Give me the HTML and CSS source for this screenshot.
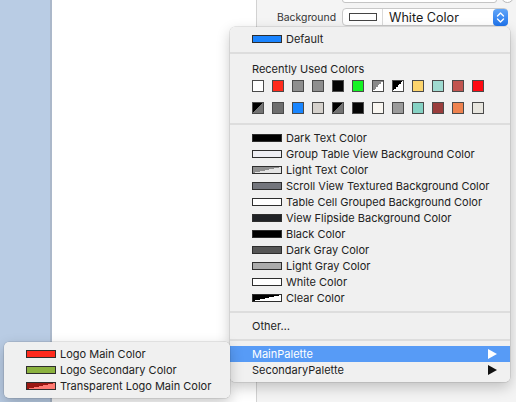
FILE: index.html
```html
<!DOCTYPE html>
<html>
<head>
<meta charset="utf-8">
<link rel="stylesheet" href="styles.css">
</head>
<body>
<div class="app">
  <div class="sidebar"></div>
  <div class="canvas"></div>
  <div class="inspector">
    <div class="field-row">
      <div class="field"></div>
      <div class="round"></div>
    </div>
    <div class="bg-row">
      <span class="bg-label">Background</span>
      <div class="popup">
        <span class="popup-well"><span class="well-swatch"></span></span>
        <span class="popup-text">White Color</span>
        <span class="stepper">
          <svg width="9" height="13" viewBox="0 0 9 13"><path d="M1.5 5 L4.5 2 L7.5 5 M1.5 8 L4.5 11 L7.5 8" fill="none" stroke="#fff" stroke-width="1.4" stroke-linecap="round" stroke-linejoin="round"/></svg>
        </span>
      </div>
    </div>
  </div>
</div>

<div class="menu">
  <div class="item"><span class="sw" style="background:#1a84ff"></span>Default</div>
  <div class="sep"></div>
  <div class="item label">Recently Used Colors</div>
  <div class="grid">
    <span class="cs" style="background:#ffffff"></span>
    <span class="cs" style="background:#ff2b1c"></span>
    <span class="cs" style="background:#8e8e8e"></span>
    <span class="cs" style="background:#8e8e8e"></span>
    <span class="cs" style="background:#050505"></span>
    <span class="cs" style="background:#15f224"></span>
    <span class="cs" style="background:linear-gradient(to bottom right,#8a8a8a 50%,#ffffff 50%)"></span>
    <span class="cs" style="background:linear-gradient(to bottom right,#000000 50%,#ffffff 50%)"></span>
    <span class="cs" style="background:#fdd46c"></span>
    <span class="cs" style="background:#9fdad0"></span>
    <span class="cs" style="background:#c1544f"></span>
    <span class="cs" style="background:#ff0a12"></span>
    <span class="cs" style="background:linear-gradient(to bottom right,#000000 50%,#747474 50%)"></span>
    <span class="cs" style="background:#6e6e6e"></span>
    <span class="cs" style="background:#1a86ff"></span>
    <span class="cs" style="background:#d5d1cc"></span>
    <span class="cs" style="background:linear-gradient(to bottom right,#000000 50%,#747474 50%)"></span>
    <span class="cs" style="background:#050505"></span>
    <span class="cs" style="background:#f9f6f1"></span>
    <span class="cs" style="background:#9b9b9b"></span>
    <span class="cs" style="background:#86d2c4"></span>
    <span class="cs" style="background:#9a3d3c"></span>
    <span class="cs" style="background:#ee824f"></span>
    <span class="cs" style="background:#e7e5de"></span>
  </div>
  <div class="sep"></div>
  <div class="item"><span class="sw" style="background:#000000"></span>Dark Text Color</div>
  <div class="item"><span class="sw" style="background:#efeff4"></span>Group Table View Background Color</div>
  <div class="item"><span class="sw" style="background:linear-gradient(to bottom right,#8f8f8f 50%,#e4e4e4 50%)"></span>Light Text Color</div>
  <div class="item"><span class="sw" style="background:#73757c"></span>Scroll View Textured Background Color</div>
  <div class="item"><span class="sw" style="background:#ffffff"></span>Table Cell Grouped Background Color</div>
  <div class="item"><span class="sw" style="background:#202226"></span>View Flipside Background Color</div>
  <div class="item"><span class="sw" style="background:#000000"></span>Black Color</div>
  <div class="item"><span class="sw" style="background:#565656"></span>Dark Gray Color</div>
  <div class="item"><span class="sw" style="background:#ababab"></span>Light Gray Color</div>
  <div class="item"><span class="sw" style="background:#ffffff"></span>White Color</div>
  <div class="item"><span class="sw" style="background:linear-gradient(to bottom right,#000000 50%,#ffffff 50%)"></span>Clear Color</div>
  <div class="sep"></div>
  <div class="item">Other…</div>
  <div class="sep"></div>
  <div class="item selected">MainPalette<svg class="arrow" width="9" height="10" viewBox="0 0 9 10"><polygon points="0,0 9,5 0,10" fill="#fff"/></svg></div>
  <div class="item">SecondaryPalette<svg class="arrow" width="9" height="10" viewBox="0 0 9 10"><polygon points="0,0 9,5 0,10" fill="#111"/></svg></div>
</div>

<div class="submenu">
  <div class="item"><span class="sw" style="background:#ff2a1d"></span>Logo Main Color</div>
  <div class="item"><span class="sw" style="background:#8bb23f"></span>Logo Secondary Color</div>
  <div class="item"><span class="sw" style="background:linear-gradient(to bottom right,#9a1812 50%,#ff7a72 50%)"></span>Transparent Logo Main Color</div>
</div>
</body>
</html>
```

FILE: styles.css
```css
html, body {
  margin: 0;
  padding: 0;
}
body {
  width: 516px;
  height: 402px;
  overflow: hidden;
  position: relative;
  font-family: "Inter", "Liberation Sans", sans-serif;
  color: #222;
  background: #fff;
}
.app {
  display: flex;
  height: 402px;
}
.sidebar {
  width: 50px;
  background: #b9cce4;
  border-right: 2px solid #abb8ca;
}
.canvas {
  width: 204px;
  background: #ffffff;
}
.inspector {
  flex: 1;
  background: #f4f4f4;
  border-left: 1px solid #d2d2d2;
}
.field-row {
  height: 3px;
  display: flex;
  align-items: flex-end;
}
.field {
  margin-left: 85px;
  width: 155px;
  height: 16px;
  box-sizing: border-box;
  border: 1px solid #c4c4c4;
  border-radius: 3px;
  background: #fff;
}
.round {
  margin-left: 4px;
  width: 13px;
  height: 13px;
  box-sizing: border-box;
  border: 1px solid #b8b8b8;
  border-radius: 50%;
  background: #fff;
}
.bg-row {
  margin-top: 5px;
  height: 18px;
  display: flex;
  align-items: center;
}
.bg-label {
  width: 79px;
  text-align: right;
  font-size: 10.4px;
  color: #333;
}
.popup {
  margin-left: 6px;
  width: 166px;
  height: 18px;
  box-sizing: border-box;
  border: 1px solid #c8c8c8;
  border-radius: 4px;
  background: #fff;
  display: flex;
  align-items: center;
}
.popup-well {
  width: 40px;
  height: 100%;
  box-sizing: border-box;
  border-right: 1px solid #dadada;
  display: flex;
  align-items: center;
  justify-content: center;
}
.well-swatch {
  width: 28px;
  height: 8px;
  box-sizing: border-box;
  border: 1px solid #444;
  background: #fff;
}
.popup-text {
  padding-left: 6px;
  font-size: 12.6px;
  color: #1a1a1a;
}
.stepper {
  margin-left: auto;
  width: 15px;
  height: 17px;
  margin-right: -1px;
  border-radius: 4px;
  background: linear-gradient(#62a6f8, #1e73ec);
  display: flex;
  align-items: center;
  justify-content: center;
}
.menu, .submenu {
  position: absolute;
  padding: 4px 0;
  background: rgba(240, 240, 240, 0.99);
  border-radius: 5px;
  box-shadow: 0 0 0 0.5px rgba(0, 0, 0, 0.16), 0 5px 14px rgba(0, 0, 0, 0.22);
  font-size: 11px;
}
.menu {
  left: 230px;
  top: 27px;
  width: 280px;
}
.submenu {
  left: 4px;
  top: 342px;
  width: 226px;
}
.item {
  height: 16px;
  display: flex;
  align-items: center;
  padding-left: 22px;
  padding-right: 13px;
  white-space: nowrap;
}
.item.label {
  height: 17px;
  padding-top: 0;
  align-items: flex-end;
}
.item.selected {
  background: #579bf6;
  color: #fff;
}
.sw {
  width: 30px;
  height: 8px;
  box-sizing: border-box;
  border: 1px solid #2e2e2e;
  margin-right: 4px;
  flex: none;
}
.arrow {
  margin-left: auto;
}
.sep {
  height: 12px;
  display: flex;
  align-items: center;
}
.sep::before {
  content: "";
  flex: 1;
  height: 2px;
  background: #dddddd;
}
.grid {
  padding: 4px 22px;
  display: grid;
  grid-template-columns: repeat(12, 12px);
  grid-auto-rows: 12px;
  column-gap: 8px;
  row-gap: 10px;
}
.cs {
  box-sizing: border-box;
  border: 1px solid #4a4a4a;
}
```
